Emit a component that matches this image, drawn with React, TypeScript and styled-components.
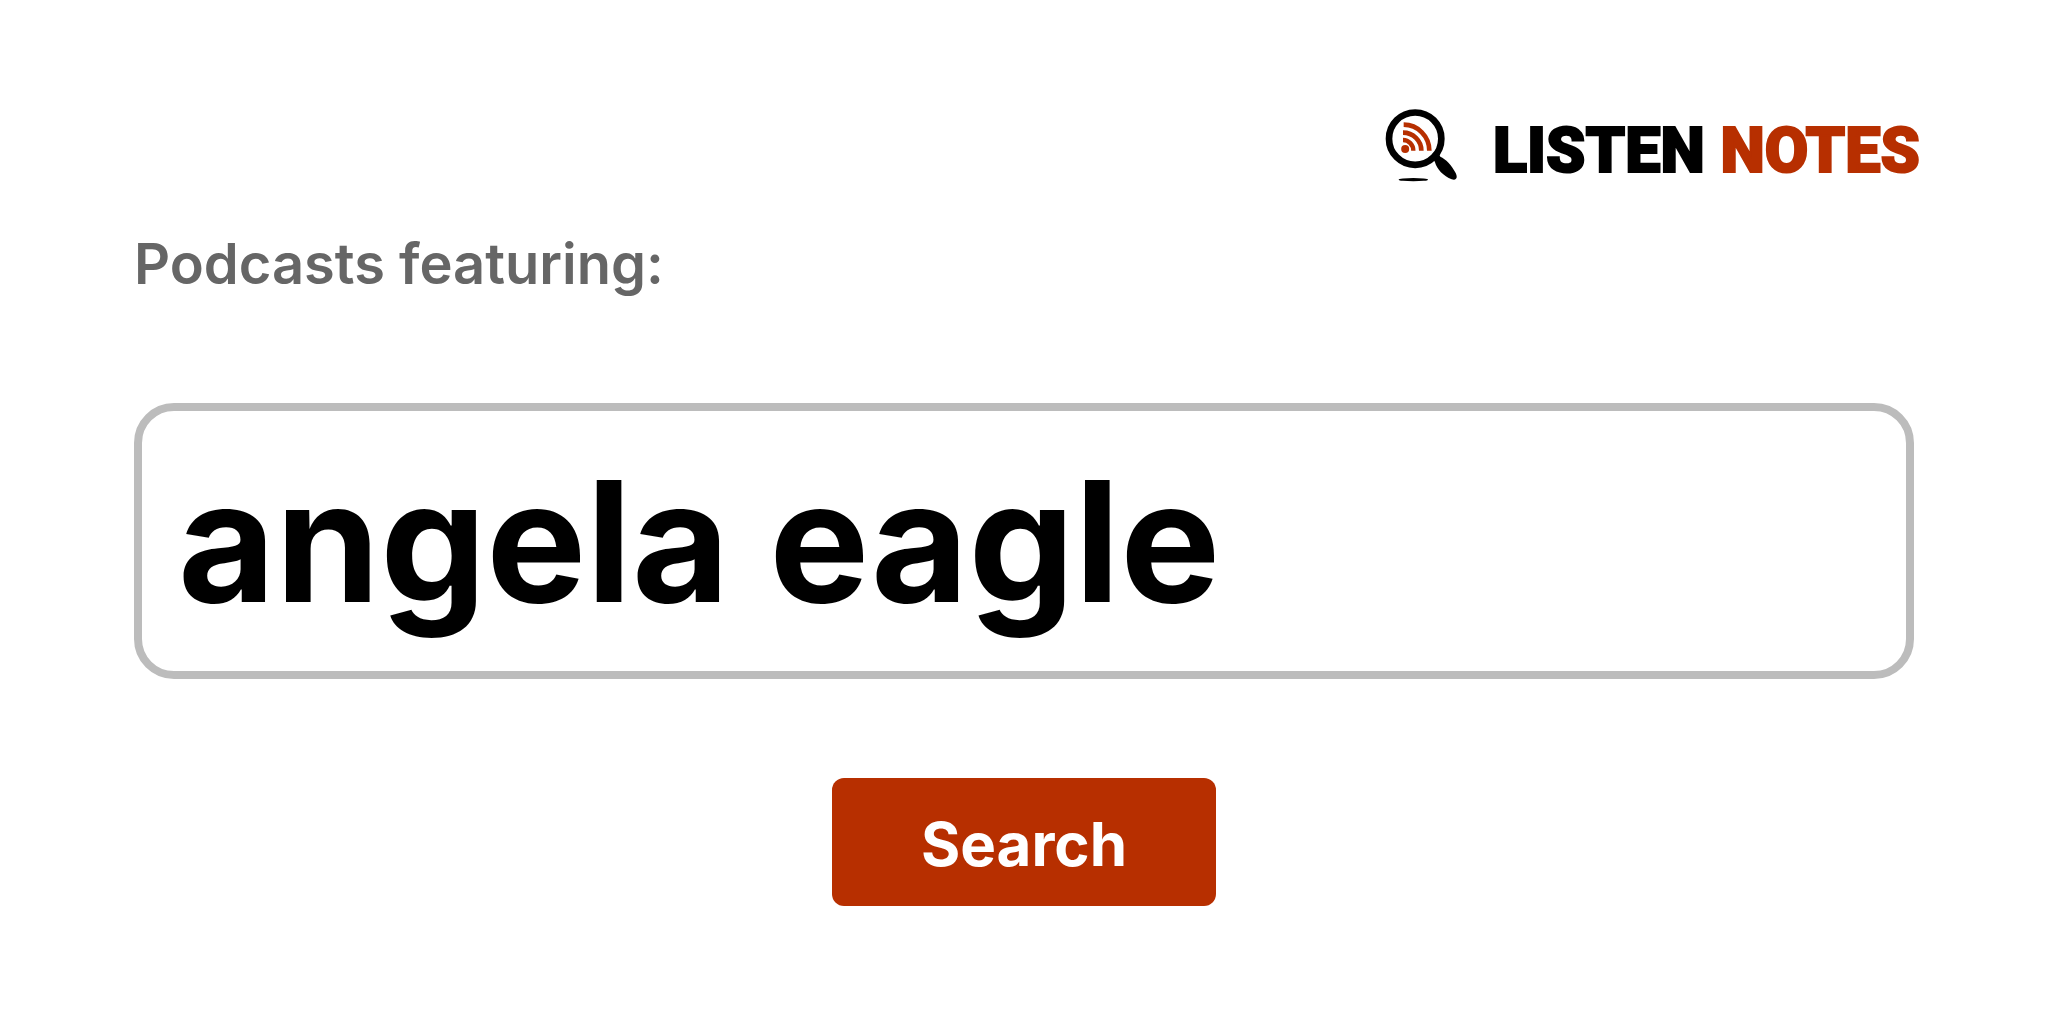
import React, { useState } from "react";
import styled, { createGlobalStyle } from "styled-components";

const GlobalStyle = createGlobalStyle`
  *, *::before, *::after { box-sizing: border-box; }
  body {
    margin: 0;
    background: #ffffff;
    font-family: Inter, "Liberation Sans", sans-serif;
  }
`;

const Page = styled.main`
  padding: 108px 128px;
`;

const Header = styled.header`
  display: flex;
  justify-content: flex-end;
`;

const Brand = styled.a`
  display: flex;
  align-items: flex-end;
  gap: 36px;
  color: #000000;
  text-decoration: none;
`;

const Mark = styled.svg`
  width: 72px;
  height: 74px;
`;

const Wordmark = styled.span`
  font-family: Roboto, "Liberation Sans", sans-serif;
  font-size: 63px;
  font-weight: 900;
  line-height: 62px;
  white-space: nowrap;
  -webkit-text-stroke: 2px currentColor;
`;

const Accent = styled.span`
  color: #b72f00;
`;

const SearchForm = styled.form`
  display: flex;
  flex-direction: column;
  padding: 48px 6px 0;
`;

const Label = styled.label`
  color: #666666;
  font-size: 56px;
  font-weight: 600;
  line-height: 68px;
`;

const SearchInput = styled.input`
  width: 100%;
  height: 276px;
  margin: 105px 0 99px;
  padding: 0 36px;
  border: 8px solid #bcbcbc;
  border-radius: 40px;
  background: #ffffff;
  color: #000000;
  font-family: inherit;
  font-size: 168px;
  font-weight: 700;
  outline: none;
`;

const SearchButton = styled.button`
  align-self: center;
  width: 384px;
  height: 128px;
  padding: 4px 0 0;
  border: 0;
  border-radius: 12px;
  background: #b72f00;
  color: #ffffff;
  font-family: inherit;
  font-size: 60px;
  font-weight: 700;
  cursor: pointer;
`;

function MagnifierMark() {
  return (
    <Mark viewBox="40 25 216 222" aria-hidden="true">
      <circle cx="130.5" cy="117" r="78.5" fill="none" stroke="#000" strokeWidth="20" />
      <path
        d="M183 174 L200 160 L206 171 C222 178 240 196 252 220 C259 235 254 243 240 239 C216 230 195 208 190 188 Z"
        fill="#000"
      />
      <ellipse cx="125" cy="240" rx="44" ry="5" fill="#000" />
      <circle cx="100.5" cy="148" r="12" fill="#b72f00" />
      <g fill="none" stroke="#b72f00" strokeWidth="14">
        <path d="M96 75 A77 78 0 0 1 173 153" />
        <path d="M94 99 A55 54 0 0 1 149 153" />
        <path d="M94 121 A31 32 0 0 1 125 153" strokeWidth="13" />
      </g>
    </Mark>
  );
}

export default function App() {
  const [query, setQuery] = useState("angela eagle");

  return (
    <>
      <GlobalStyle />
      <Page>
        <Header>
          <Brand href="#">
            <MagnifierMark />
            <Wordmark>
              LISTEN <Accent>NOTES</Accent>
            </Wordmark>
          </Brand>
        </Header>
        <SearchForm onSubmit={(event) => event.preventDefault()}>
          <Label htmlFor="query">Podcasts featuring:</Label>
          <SearchInput
            id="query"
            type="text"
            value={query}
            onChange={(event) => setQuery(event.target.value)}
          />
          <SearchButton type="submit">Search</SearchButton>
        </SearchForm>
      </Page>
    </>
  );
}
